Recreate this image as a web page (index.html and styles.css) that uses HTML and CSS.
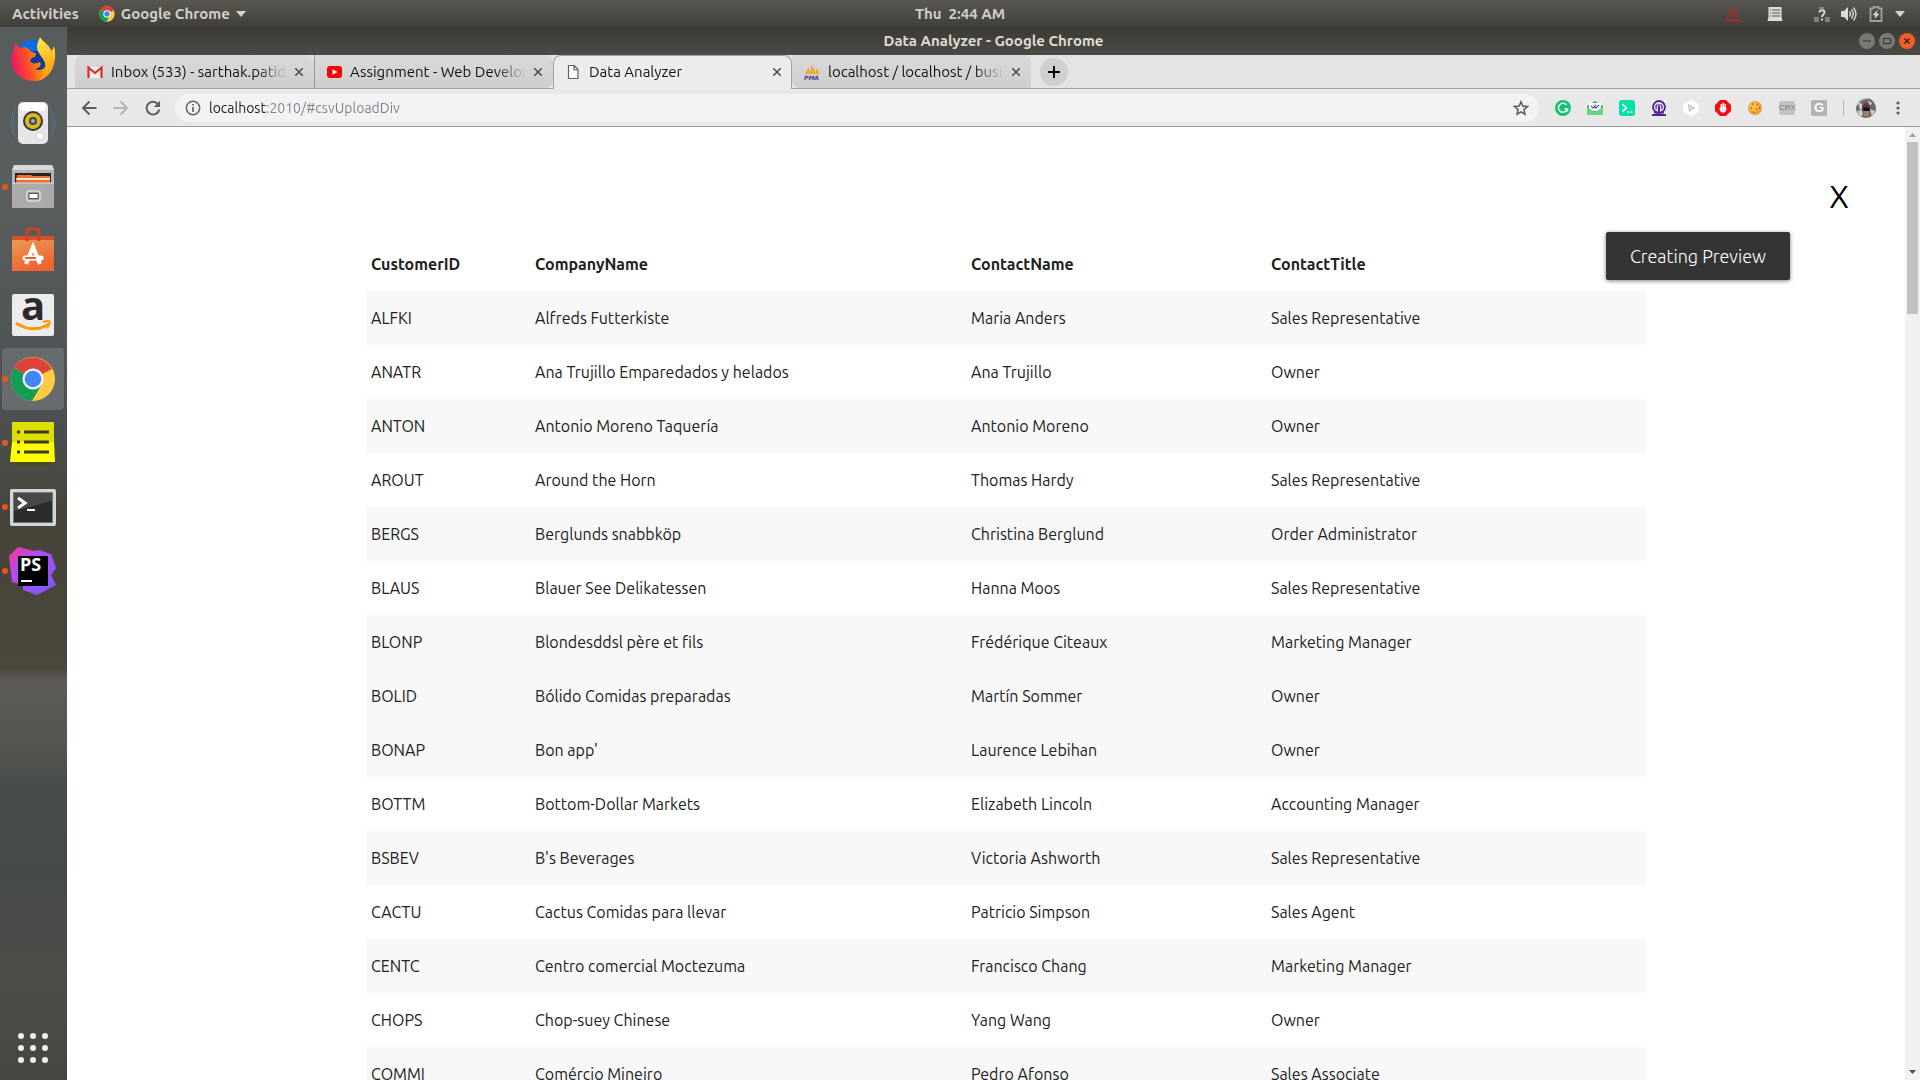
FILE: index.html
```html
<!DOCTYPE html>
<html lang="en">
<head>
<meta charset="utf-8">
<title>Data Analyzer</title>
<link rel="stylesheet" href="styles.css">
</head>
<body>
<header class="topbar">
  <div class="topbar-side">
    <button class="top-item">Activities</button>
    <button class="top-item app-menu">
      <svg class="i16" viewBox="0 0 48 48"><circle cx="24" cy="24" r="23" fill="#fc4"/><path d="M24 24 4 12A23 23 0 0 1 44 13z" fill="#db4437"/><path d="M4 12A23 23 0 0 0 22 47L33 29 24 24z" fill="#0f9d58"/><circle cx="24" cy="24" r="11" fill="#fff"/><circle cx="24" cy="24" r="8" fill="#4285f4"/></svg>
      <span>Google Chrome</span>
      <svg class="caret" viewBox="0 0 10 6"><path d="M0 0h10L5 6z" fill="#d6d3cd"/></svg>
    </button>
  </div>
  <time class="clock">Thu&nbsp; 2:44 AM</time>
  <div class="topbar-side tray">
    <svg class="i16 tray-warn" viewBox="0 0 16 16" fill="none" stroke="#d91e1e"><path d="M8 1.2 15.2 14.5H.8z"/><path d="M8 5.5v5M8 11.5v1.6" stroke-width="1.6"/></svg>
    <svg class="i16 tray-list" viewBox="0 0 16 16"><path d="M1.5 1h13v10l1 4H.5l1-4z" fill="#dedbd6"/><path d="M3 4h1m1 0h8M3 7h1m1 0h8M3 10h1m1 0h8" stroke="#55534c" stroke-width="1.1"/></svg>
    <svg class="i16" viewBox="0 0 16 16"><path d="M0 11h5v5H0zM11 11h5v5h-5zM5 1h5v2H5z" fill="#85827b"/><path d="M5.5 6.5c0-3 5-3 5 0C10.500 8.500 8 8.500 8 11M8 12.500v2" fill="none" stroke="#dedbd6" stroke-width="1.900"/></svg>
    <svg class="i16" viewBox="0 0 16 16"><path d="M0 5h3l4-4v14l-4-4H0z" fill="#dedbd6"/><path d="M8.500 5.500q2 2.500 0 5M10.500 3.500q3.500 4.500 0 9M12.500 1.500q5 6.500 0 13" fill="none" stroke="#dedbd6" stroke-width="1.400"/></svg>
    <svg class="i16" viewBox="0 0 16 16"><path d="M5.500 1.500V.8h5v1.500H13.500V15h-11V2.300h3z" fill="none" stroke="#a5a29b" stroke-width="1.800"/><path d="M9.500 4 4.500 9.300h2.800L6.500 13l5-5.300H8.700z" fill="#dedbd6"/></svg>
    <svg class="caret" viewBox="0 0 10 6"><path d="M0 0h10L5 6z" fill="#d6d3cd"/></svg>
  </div>
</header>
<div class="desktop">
<nav class="dock" aria-label="Dock">
  <button class="dock-app" aria-label="Firefox"><svg viewBox="0 0 48 48"><defs><linearGradient id="ff" x1="0" y1="0.600" x2="1" y2="0.400"><stop offset="0" stop-color="#e8136e"/><stop offset=".35" stop-color="#ff4a2c"/><stop offset=".7" stop-color="#ff9a0a"/><stop offset="1" stop-color="#ffc928"/></linearGradient><linearGradient id="fy" x1="0" y1="0" x2="0.300" y2="1"><stop offset="0" stop-color="#fff04a"/><stop offset="1" stop-color="#ff9d0c"/></linearGradient></defs><circle cx="25" cy="25" r="20" fill="#0a6be8"/><circle cx="28" cy="28" r="12" fill="#103c94"/><path d="M7 8c1 2 2 4 4 5 3-1 6-1 9 1 1 2 3 4 7 4l-1 4c-3 0-4 2-5 4 3 4 7 2 10 1 2 3-1 6-5 7 7 3 13-2 13-10l6-13c4 13-2 35-20 35C8 46-2 30 4 17c0-4 1-7 3-9z" fill="url(#ff)"/><path d="M31 2c2 5 14 9 14 24 0 9-7 17-15 19 5-6 7-11 6-17-2-6-8-10-8-16 0-4 2-7 3-10z" fill="url(#fy)"/></svg></button>
  <button class="dock-app" aria-label="Rhythmbox"><svg viewBox="0 0 48 48"><g fill="none" stroke="#4d7bab" opacity=".7"><path d="M7 9q-6 15 0 30M4 13q-4 11 0 22M41 9q6 15 0 30M44 13q4 11 0 22"/></g><rect x="9" y="3" width="30" height="42" rx="5" fill="#e6e6e6"/><rect x="11" y="4" width="26" height="8" rx="4" fill="#fff"/><circle cx="24" cy="22" r="10" fill="#333"/><circle cx="24" cy="22" r="8" fill="#d6ba20"/><circle cx="24" cy="22" r="4" fill="#444"/><circle cx="24" cy="22" r="2" fill="#aaa"/><circle cx="31" cy="37" r="4" fill="#fff" stroke="#ccc"/></svg></button>
  <button class="dock-app running" aria-label="Files"><svg viewBox="0 0 48 48"><path d="M5 2h38l2 5v38H3V7z" fill="#b5b5b5"/><path d="M5 2h38l2 5H3z" fill="#d8d8d8"/><path d="M6 10h36v10H6z" fill="#28211c"/><path d="M8 12h14l2 1h17v7H7z" fill="#e67332"/><path d="M7 16h34" stroke="#fff" stroke-width="1.500"/><path d="M3 20h42v25H3z" fill="#aaa"/><path d="M3 20h42" stroke="#ddd"/><rect x="18" y="28" width="13" height="10" rx="2" fill="#999" stroke="#ddd" stroke-width="1.500"/><path d="M20 30.500h9v5h-9z" fill="#fff" stroke="#555"/></svg></button>
  <button class="dock-app" aria-label="Ubuntu Software"><svg viewBox="0 0 48 48"><defs><linearGradient id="sw" x2="0.400" y2="1"><stop stop-color="#e99a55"/><stop offset="1" stop-color="#ee6433"/></linearGradient></defs><path d="M3 12h42v32H3z" fill="url(#sw)"/><path d="M3 9h42v4H3z" fill="#d7502a"/><path d="M18 14V6q0-4 3-4h6q3 0 3 4v8" fill="none" stroke="#c94420" stroke-width="3"/><path d="M17 37 24 20l7 17" fill="none" stroke="#fff" stroke-width="4"/><path d="M16 31h16" stroke="#fff" stroke-width="5" stroke-linecap="round"/><path d="M16 31h11" stroke="#e8622f" stroke-width="2"/></svg></button>
  <button class="dock-app" aria-label="Amazon"><svg viewBox="0 0 48 48"><rect x="3" y="3" width="42" height="42" rx="2" fill="#ececec"/><text x="24" y="29" text-anchor="middle" class="amazon-a">a</text><path d="M7 32q17 11 33 1" fill="none" stroke="#f90" stroke-width="2.800"/><path d="M34 31q6-2 7 0 0 3-3 6" fill="none" stroke="#f90" stroke-width="2"/></svg></button>
  <button class="dock-app running focused" aria-label="Google Chrome"><svg viewBox="0 0 48 48"><circle cx="24" cy="24" r="22" fill="#fc4"/><path d="M24 24 5 13A22 22 0 0 1 43 14z" fill="#db4437"/><path d="M5 13A22 22 0 0 0 23 46L33 29 24 24z" fill="#0f9d58"/><circle cx="24" cy="24" r="10.500" fill="#f4f4f4"/><circle cx="24" cy="24" r="8.300" fill="#4285f4"/></svg></button>
  <button class="dock-app running" aria-label="Notes"><svg viewBox="0 0 48 48"><path d="M4 41h40l2 5H4z" fill="#4c4c16"/><path d="M3 3h42v20l1 20H1l2-20z" fill="#ff0"/><path d="M3 3h42v20H3z" fill="#dede00"/><path d="M8 13h3m4 0h25M8 23h3m4 0h25M8 33h3m4 0h25" stroke="#3a3a28" stroke-width="3"/></svg></button>
  <button class="dock-app running" aria-label="Terminal"><svg viewBox="0 0 48 48"><rect x="1" y="6" width="46" height="37" rx="2" fill="#d5d5d5"/><path d="M4.500 9.500h39v30h-39z" fill="#2b2b2b" stroke="#777"/><path d="M5 10h38v8L5 28z" fill="#484848"/><path d="m9 15 7 5-7 5" fill="none" stroke="#fff" stroke-width="3"/><path d="M18 27h8" stroke="#fff" stroke-width="2"/></svg></button>
  <button class="dock-app running" aria-label="PhpStorm"><svg viewBox="0 0 48 48"><defs><linearGradient id="ps" x2="1" y2="1"><stop stop-color="#ff318c"/><stop offset=".35" stop-color="#b74af7"/><stop offset="1" stop-color="#765af8"/></linearGradient></defs><path d="M0 9 9 0l16 4 5-1 12 4 5 14-5 7 5 10-19 10-14-5v-5L3 35z" fill="url(#ps)"/><path d="M9 9h30v30H9z"/><text x="11" y="24" class="ps-text">PS</text><path d="M12 34h11" stroke="#fff" stroke-width="2"/></svg></button>
  <button class="dock-app show-apps" aria-label="Show Applications"><svg viewBox="0 0 48 48"><path d="M12 12h.01M24 12h.01M36 12h.01M12 24h.01M24 24h.01M36 24h.01M12 36h.01M24 36h.01M36 36h.01" stroke="#f0efed" stroke-width="6" stroke-linecap="round"/></svg></button>
</nav>
<div class="window">
  <div class="titlebar">
    <h1 class="window-title">Data Analyzer - Google Chrome</h1>
    <div class="window-controls">
      <button class="wc" aria-label="Minimize"><svg class="i16" viewBox="0 0 16 16"><path d="M4 8h8" stroke="#34332f"/></svg></button>
      <button class="wc" aria-label="Maximize"><svg class="i16" viewBox="0 0 16 16"><path d="M4.500 5.500h7v5h-7z" fill="none" stroke="#34332f"/></svg></button>
      <button class="wc wc-close" aria-label="Close"><svg class="i16" viewBox="0 0 16 16"><path d="m5.500 5.500 5 5m0-5-5 5" stroke="#3a2018" stroke-width="1.400"/></svg></button>
    </div>
  </div>
  <div class="tabs">
    <div class="tab">
      <svg class="i16" viewBox="0 0 16 16"><path d="M1 3h14v11H1z" fill="#f2f2f2"/><path d="M1.500 14V3.500L8 9l6.500-5.500V14" fill="none" stroke="#d93025" stroke-width="2.200"/></svg>
      <span class="tab-title">Inbox (533) - sarthak.patidar</span>
      <button class="tab-close" aria-label="Close tab"><svg viewBox="0 0 8 8"><path d="m0 0 8 8m0-8L0 8"/></svg></button>
    </div>
    <div class="tab divided">
      <svg class="i16" viewBox="0 0 16 16"><rect y="2" x="1" width="15" height="12" rx="3" fill="red"/><path d="m6.500 5.300 5 2.700-5 2.700z" fill="#fff"/></svg>
      <span class="tab-title">Assignment - Web Development</span>
      <button class="tab-close" aria-label="Close tab"><svg viewBox="0 0 8 8"><path d="m0 0 8 8m0-8L0 8"/></svg></button>
    </div>
    <div class="tab active">
      <svg class="i16" viewBox="0 0 16 16" fill="#fff" stroke="#5f6368" stroke-width="1.200"><path d="M3.500 1.500h6l3.500 4v9H3.500zM9 1.500V6h4"/></svg>
      <span class="tab-title">Data Analyzer</span>
      <button class="tab-close" aria-label="Close tab"><svg viewBox="0 0 8 8"><path d="m0 0 8 8m0-8L0 8"/></svg></button>
    </div>
    <div class="tab last">
      <svg class="i16" viewBox="0 0 16 16"><path d="M1 10 5 3v7zM5.500 10 8 0v10zM8.500 10V1L12 10zM12 10V4l4 6z" fill="#f8a01c"/><text x="0" y="16" class="pma">PMA</text></svg>
      <span class="tab-title">localhost / localhost / business</span>
      <button class="tab-close" aria-label="Close tab"><svg viewBox="0 0 8 8"><path d="m0 0 8 8m0-8L0 8"/></svg></button>
    </div>
    <button class="new-tab" aria-label="New tab"><svg viewBox="0 0 12 12"><path d="M6 0v12M0 6h12" stroke="#000" stroke-width="2"/></svg></button>
  </div>
  <div class="toolbar">
    <button class="tool" aria-label="Back"><svg class="i16" viewBox="0 0 16 16" fill="none" stroke="#5a5d61" stroke-width="1.900"><path d="M15.500 8H2M8.500 1.500 2 8l6.500 6.500"/></svg></button>
    <button class="tool" aria-label="Forward"><svg class="i16" viewBox="0 0 16 16" fill="none" stroke="#b2b3b5" stroke-width="1.900"><path d="M.5 8H14M7.500 1.500 14 8l-6.500 6.500"/></svg></button>
    <button class="tool" aria-label="Reload"><svg class="i16" viewBox="0 0 16 16"><path d="M13.300 4.500A6.400 6.400 0 1 0 14.300 9.500" fill="none" stroke="#5a5d61" stroke-width="2"/><path d="M15 .8V7H8.800z" fill="#5a5d61"/></svg></button>
    <div class="omnibox">
      <svg class="i16" viewBox="0 0 16 16" fill="none" stroke="#5f6368" stroke-width="1.500"><circle cx="8" cy="8" r="6.700"/><path d="M8 7v5M8 4v1.600" stroke-width="1.700"/></svg>
      <input class="url" type="text" aria-label="Address" value="localhost:2010/#csvUploadDiv">
      <button class="star" aria-label="Bookmark"><svg class="i16" viewBox="0 0 16 16"><path d="m8 1.800 1.800 4.300 4.700.4-3.600 3.100 1.100 4.600L8 11.800l-4 2.400 1.100-4.600-3.600-3.100 4.700-.4z" fill="none" stroke="#5a5d61" stroke-width="1.500"/></svg></button>
    </div>
    <button class="tool" aria-label="Grammarly"><svg class="i16" viewBox="0 0 16 16"><circle cx="8" cy="8" r="8" fill="#12c470"/><path d="M11.500 5A4.500 4.500 0 1 0 12.300 9H9.500M12.500 8.500v3" fill="none" stroke="#fff" stroke-width="1.500"/></svg></button>
    <button class="tool" aria-label="Mail tracker"><svg class="i16" viewBox="0 0 16 16"><path d="M0 6 8 1l8 5v9H0z" fill="#3cae5c"/><path d="M2 3h12v8H2z" fill="#fff"/><path d="m0 7 8 5 8-5v8H0z" fill="#6bd483"/><path d="m4 6 2 2 3-3M7.500 7 9 8l3-3" fill="none" stroke="#6a3bc0" stroke-width="1.200"/></svg></button>
    <button class="tool" aria-label="Console"><svg class="i16" viewBox="0 0 16 16"><rect width="16" height="16" rx="3" fill="#00e3a7"/><path d="m3.500 4 4 4-4 3.500M8 12h2m1.500 0h2" fill="none" stroke="#fff" stroke-width="1.700"/></svg></button>
    <button class="tool" aria-label="Podcast"><svg class="i16" viewBox="0 0 16 16"><path d="M1 0h14v16H1z" fill="#fff"/><circle cx="8" cy="7" r="6" fill="#e4dcf0" stroke="#54258c" stroke-width="1.800"/><path d="M1 15h14M3 12.500h3m4 0h3M8 6v9" fill="none" stroke="#54258c" stroke-width="2"/><path d="M5.500 9Q4 6 6.500 4.500M10.500 9Q12 6 9.500 4.500M8 4v2" fill="none" stroke="#54258c" stroke-width="1.200"/></svg></button>
    <button class="tool" aria-label="Pointer"><svg class="i16" viewBox="0 0 16 16"><path d="m8 0 7.500 4v8L8 16 .5 12V4z" fill="#fff"/><path d="m5.500 4.500 6 3.500-3 1-2 2.500z" fill="#e4e4e4" stroke="#bbb"/></svg></button>
    <button class="tool" aria-label="Ad blocker"><svg class="i16" viewBox="0 0 16 16"><path d="M5 0h6l5 5v6l-5 5H5l-5-5V5z" fill="#f40d12"/><path d="M5 8q1 4 3 4t3-4M6.300 10V4M8.200 10V3M10.200 10V4M6 8h4v3H7z" fill="none" stroke="#fff" stroke-width="1.500"/></svg></button>
    <button class="tool" aria-label="Cookies"><svg class="i16" viewBox="0 0 16 16"><circle cx="8" cy="8" r="7" fill="#e9a02c"/><circle cx="7" cy="7" r="5" fill="#f4ba45"/><path d="M5 4h1M9.500 5h1M4 8h1M9 9h1M6 12h1M12 8h1" stroke="#87501a" stroke-width="1.400"/></svg></button>
    <button class="tool" aria-label="CRX"><span class="crx">CRX</span></button>
    <button class="tool" aria-label="Grabber"><span class="gext">G</span></button>
    <span class="separator"></span>
    <button class="profile" aria-label="Profile"><svg viewBox="0 0 20 20"><defs><clipPath id="av"><circle cx="10" cy="10" r="10"/></clipPath></defs><g clip-path="url(#av)"><path d="M0 0h20v20H0z" fill="#a9b0a8"/><path d="M0 9 5 3l10-3 5 8v12H0z" fill="#67686a"/><path d="m2 4 4 2 2 4-4 2zM14 11l5 2-3 6zM1 13l5-1 1 5-3 2zM12 2l4 3-2 3z" fill="#c9ccd0"/><path d="M6 8q4-6 8 0v4H6z" fill="#6b2f48"/><path d="M7 10q4-2 7 1l-1 3H8z" fill="#161316"/><path d="M8 13h5v4l-2 2-3-1z" fill="#a97b60"/></g></svg></button>
    <button class="menu" aria-label="Menu"><svg class="i16" viewBox="0 0 16 16"><path d="M8 3h.01M8 8h.01M8 13h.01" stroke="#5a5d61" stroke-width="3.200" stroke-linecap="round"/></svg></button>
  </div>
  <div class="viewport">
    <main class="page">
      <button class="close-preview">X</button>
      <div class="toast" role="status">Creating Preview</div>
      <table class="preview">
        <thead><tr><th class="c-id">CustomerID</th><th class="c-company">CompanyName</th><th class="c-contact">ContactName</th><th>ContactTitle</th></tr></thead>
        <tbody>
          <tr><td>ALFKI</td><td>Alfreds Futterkiste</td><td>Maria Anders</td><td>Sales Representative</td></tr>
          <tr><td>ANATR</td><td>Ana Trujillo Emparedados y helados</td><td>Ana Trujillo</td><td>Owner</td></tr>
          <tr><td>ANTON</td><td>Antonio Moreno Taquería</td><td>Antonio Moreno</td><td>Owner</td></tr>
          <tr><td>AROUT</td><td>Around the Horn</td><td>Thomas Hardy</td><td>Sales Representative</td></tr>
          <tr><td>BERGS</td><td>Berglunds snabbköp</td><td>Christina Berglund</td><td>Order Administrator</td></tr>
          <tr><td>BLAUS</td><td>Blauer See Delikatessen</td><td>Hanna Moos</td><td>Sales Representative</td></tr>
          <tr><td>BLONP</td><td>Blondesddsl père et fils</td><td>Frédérique Citeaux</td><td>Marketing Manager</td></tr>
          <tr class="highlighted"><td>BOLID</td><td>Bólido Comidas preparadas</td><td>Martín Sommer</td><td>Owner</td></tr>
          <tr><td>BONAP</td><td>Bon app'</td><td>Laurence Lebihan</td><td>Owner</td></tr>
          <tr><td>BOTTM</td><td>Bottom-Dollar Markets</td><td>Elizabeth Lincoln</td><td>Accounting Manager</td></tr>
          <tr><td>BSBEV</td><td>B's Beverages</td><td>Victoria Ashworth</td><td>Sales Representative</td></tr>
          <tr><td>CACTU</td><td>Cactus Comidas para llevar</td><td>Patricio Simpson</td><td>Sales Agent</td></tr>
          <tr><td>CENTC</td><td>Centro comercial Moctezuma</td><td>Francisco Chang</td><td>Marketing Manager</td></tr>
          <tr><td>CHOPS</td><td>Chop-suey Chinese</td><td>Yang Wang</td><td>Owner</td></tr>
          <tr><td>COMMI</td><td>Comércio Mineiro</td><td>Pedro Afonso</td><td>Sales Associate</td></tr>
        </tbody>
      </table>
    </main>
    <div class="scrollbar" aria-hidden="true">
      <svg class="arrow" viewBox="0 0 15 15"><path d="M4 10h7L7.500 6z" fill="#a0a0a0"/></svg>
      <div class="track"><div class="thumb"></div></div>
      <svg class="arrow" viewBox="0 0 15 15"><path d="M4 5h7L7.500 9z" fill="#505050"/></svg>
    </div>
  </div>
</div>
</div>
</body>
</html>
```
FILE: styles.css
```css
* { box-sizing: border-box; }

body {
  margin: 0;
  height: 100vh;
  display: flex;
  flex-direction: column;
  overflow: hidden;
  font-family: Ubuntu, "Noto Sans", "Open Sans", sans-serif;
  font-size: 16px;
  line-height: 20px;
  color: #212121;
}

button {
  margin: 0;
  padding: 0;
  border: 0;
  background: none;
  font: inherit;
  color: inherit;
  display: flex;
  align-items: center;
  justify-content: center;
}

svg { display: block; flex: none; }
.i16 { width: 16px; height: 16px; }
.caret { width: 10px; height: 6px; }

/* System bar */
.topbar {
  display: grid;
  grid-template-columns: 1fr auto 1fr;
  align-items: center;
  height: 27px;
  flex: none;
  padding: 0 12px;
  background: linear-gradient(#595750, #403f3a);
  color: #d2cfca;
  font-size: 15px;
  font-weight: 700;
}
.topbar-side { display: flex; align-items: center; gap: 20px; }
.app-menu { gap: 6px; }
.tray { justify-content: flex-end; gap: 11px; padding-right: 3px; }
.tray-warn { margin-right: 15px; }
.tray-list { margin-right: 20px; }

.desktop { flex: 1; min-height: 0; display: flex; }

/* Dock over the wallpaper */
.dock {
  width: 67px;
  flex: none;
  display: flex;
  flex-direction: column;
  gap: 2px;
  padding: 1px 0 1px 2px;
  background: linear-gradient(#575c5d, #5a5e5f 14%, #4f5456 32%, #4b4d4b 40%, #47443b 46%, #4a463c 60%, #4c473e 61%, #5b5a55 62%, #565550 68%, #474d4c 72%, #444a49 80%, #4a4b48 86%, #4e4d49 90%, #454542);
}
.dock-app {
  position: relative;
  width: 62px;
  height: 62px;
  border-radius: 4px;
}
.dock-app svg { width: 48px; height: 48px; }
.focused { background: #676b6d; }
.running::before {
  content: "";
  position: absolute;
  left: 0;
  top: 28px;
  width: 6px;
  height: 6px;
  border-radius: 3px;
  background: #e95420;
}
.show-apps { margin-top: auto; }
.amazon-a { font: bold 40px "Open Sans", sans-serif; fill: #2b2b2b; }
.ps-text { font: bold 18px "Open Sans", sans-serif; fill: #fff; }

/* Browser window */
.window { flex: 1; min-width: 0; display: flex; flex-direction: column; background: #fff; }
.titlebar {
  height: 28px;
  flex: none;
  display: grid;
  grid-template-columns: 1fr auto 1fr;
  align-items: center;
  padding: 0 5px;
  background: linear-gradient(#3b3a36, #4d4b45);
}
.window-title { grid-column: 2; margin: 0; font-size: 15px; font-weight: 700; line-height: 20px; color: #dfdbd2; }
.window-controls { display: flex; justify-content: flex-end; gap: 4px; }
.wc { width: 16px; height: 16px; border-radius: 8px; background: #7a7872; }
.wc-close { background: #ee5d2c; }

.tabs {
  height: 34px;
  flex: none;
  display: flex;
  padding-left: 8px;
  background: #e4e4e4;
  border-bottom: 1px solid #a3a3a3;
}
.tab {
  flex: 0 1 239px;
  min-width: 0;
  display: flex;
  align-items: center;
  gap: 8px;
  padding: 0 11px 0 12px;
  border-radius: 8px 8px 0 0;
  background: linear-gradient(#d9d9d9, #cecece);
  font-size: 15px;
  color: #111;
}
.divided { border-left: 1px solid #999; border-radius: 0 8px 8px 0; padding-left: 11px; }
.last { border-radius: 0 8px 0 8px; }
.tab.active {
  height: 34px;
  padding: 0 10px 2px 11px;
  border: 1px solid #a3a3a3;
  border-bottom: 0;
  background: #ececec;
}
.tab-title {
  flex: 1;
  overflow: hidden;
  white-space: nowrap;
  mask-image: linear-gradient(to right, #000 calc(100% - 30px), transparent);
}
.tab-close svg { width: 8px; height: 8px; }
.tab-close path { stroke: #4a4a4a; stroke-width: 1.5; }
.new-tab { align-self: center; width: 28px; height: 28px; margin-left: 9px; border-radius: 14px; background: #cfcfcf; }
.new-tab svg { width: 12px; height: 12px; }
.pma { font: italic bold 6px "DejaVu Sans", sans-serif; fill: #4b3d85; }

.toolbar {
  height: 38px;
  flex: none;
  display: flex;
  align-items: center;
  padding: 0 5px 0 6px;
  background: #e8e8e8;
  border-bottom: 1px solid #9b9b9b;
}
.tool { width: 32px; height: 28px; flex: none; }
.omnibox {
  flex: 1;
  display: flex;
  align-items: center;
  gap: 8px;
  height: 28px;
  margin: 0 8px 0 6px;
  padding: 0 10px;
  border-radius: 14px;
  background: #f1f2f4;
}
.url {
  flex: 1;
  min-width: 0;
  padding: 0;
  border: 0;
  outline: 0;
  font: inherit;
  font-size: 14px;
  color: transparent;
  background: linear-gradient(to right, #1c1d20 58px, #7d8287 58px);
  background-clip: text;
}
.crx, .gext { width: 16px; height: 14px; border-radius: 2px; background: #c4c4c4; font: 8px/14px "Liberation Sans", sans-serif; color: #777; }
.gext { height: 16px; background: #b3b3b3; font: bold 13px/16px "Liberation Sans", sans-serif; color: #fff; }
.separator { width: 1px; height: 16px; margin: 0 7px 0 8px; background: #b5b5b5; }
.profile { width: 30px; height: 28px; }
.profile svg { width: 20px; height: 20px; }
.menu { width: 34px; height: 28px; }

/* Page */
.viewport { flex: 1; min-height: 0; display: flex; }
.page {
  position: relative;
  flex: 1;
  min-width: 0;
  overflow: hidden;
  padding: 110px 0 0 40px;
}
.close-preview {
  position: absolute;
  top: 47px;
  right: 56px;
  font-size: 32px;
  line-height: 44px;
  color: #000;
}
.toast {
  position: absolute;
  top: 105px;
  right: 115px;
  padding: 12px 24px;
  border-radius: 2px;
  background: #343434;
  color: #fff;
  font-size: 18px;
  font-weight: 300;
  line-height: 24px;
  box-shadow: 0 1px 4px rgba(0, 0, 0, .5);
}
.preview {
  width: 100%;
  max-width: 1280px;
  margin: 0 auto;
  table-layout: fixed;
  border-collapse: collapse;
}
.preview th, .preview td {
  height: 54px;
  padding: 0 5px;
  text-align: left;
  white-space: nowrap;
}
.c-id { width: 164px; }
.c-company { width: 436px; }
.c-contact { width: 300px; }
.preview tbody tr:nth-child(odd), .preview .highlighted { background: #f8f8f8; }

.scrollbar { width: 15px; flex: none; display: flex; flex-direction: column; background: #f1f1f1; }
.arrow { width: 15px; height: 15px; }
.track { flex: 1; padding: 0 2px; }
.thumb { height: 172px; background: #c1c1c1; }
```
